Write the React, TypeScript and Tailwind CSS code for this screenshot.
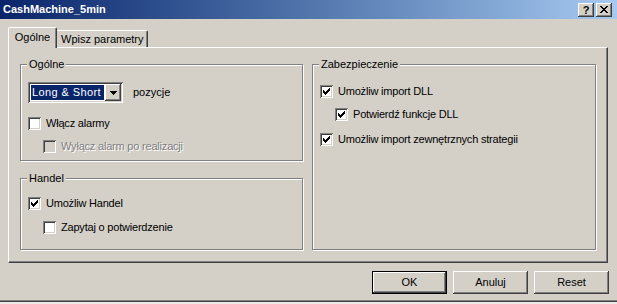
import React from "react";

const raised =
  "shadow-[inset_-1px_-1px_0_#404040,inset_1px_1px_0_#ffffff,inset_-2px_-2px_0_#808080,inset_2px_2px_0_#d4d0c8]";
const sunken =
  "shadow-[inset_1px_1px_0_#808080,inset_-1px_-1px_0_#ffffff,inset_2px_2px_0_#404040,inset_-2px_-2px_0_#d4d0c8]";

function Pixels({ rows, w, h, color = "#000" }: { rows: string[]; w: number; h: number; color?: string }) {
  const rects: React.ReactElement[] = [];
  rows.forEach((r, y) => {
    for (let x = 0; x < r.length; x++) {
      if (r[x] === "X") rects.push(<rect key={`${x}-${y}`} x={x} y={y} width={1} height={1} fill={color} />);
    }
  });
  return (
    <svg width={w} height={h} viewBox={`0 0 ${w} ${h}`} shapeRendering="crispEdges">
      {rects}
    </svg>
  );
}

const CHECK = ["......X", ".....XX", "X...XXX", "XX.XXX.", "XXXXX..", ".XXX...", "..X...."];
const CLOSE = ["XX....XX", ".XX..XX.", "..XXXX..", "...XX...", "..XXXX..", ".XX..XX.", "XX....XX"];
const ARROW = ["XXXXXXX", ".XXXXX.", "..XXX..", "...X..."];

function Checkbox({ checked, disabled }: { checked?: boolean; disabled?: boolean }) {
  return (
    <div
      className={`w-[13px] h-[13px] shrink-0 flex items-center justify-center ${sunken} ${
        disabled ? "bg-[#d4d0c8]" : "bg-white"
      }`}
    >
      {checked && <Pixels rows={CHECK} w={7} h={7} color={disabled ? "#808080" : "#000"} />}
    </div>
  );
}

function CheckRow({
  label,
  checked,
  disabled,
  indent,
  className = "",
}: {
  label: string;
  checked?: boolean;
  disabled?: boolean;
  indent?: boolean;
  className?: string;
}) {
  return (
    <div className={`flex items-center gap-[5px] h-[13px] ${indent ? "ml-[15px]" : ""} ${className}`}>
      <Checkbox checked={checked} disabled={disabled} />
      <span
        className={`leading-[13px] whitespace-nowrap tracking-[-0.2px] ${
          disabled ? "text-[#808080] [text-shadow:1px_1px_0_#ffffff]" : "text-black"
        }`}
      >
        {label}
      </span>
    </div>
  );
}

function GroupBox({
  title,
  className = "",
  children,
}: {
  title: string;
  className?: string;
  children: React.ReactNode;
}) {
  return (
    <div
      className={`relative box-border border border-[#808080] shadow-[1px_1px_0_#ffffff,inset_1px_1px_0_#ffffff] ${className}`}
    >
      <span className="absolute -top-[7px] left-[6px] px-[2px] bg-[#d4d0c8] leading-[13px] whitespace-nowrap">
        {title}
      </span>
      {children}
    </div>
  );
}

function Button({ label, isDefault }: { label: string; isDefault?: boolean }) {
  return (
    <div
      className={`w-[75px] h-[23px] box-border flex items-center justify-center bg-[#d4d0c8] ${
        isDefault ? "border border-black" : ""
      } ${raised}`}
    >
      <span className="leading-[13px]">{label}</span>
    </div>
  );
}

export default function App() {
  return (
    <div className="w-[617px] h-[304px] overflow-hidden bg-[#d4d0c8] flex flex-col text-[11px] text-black font-['Liberation_Sans',Arial,sans-serif]">
      {/* Title bar */}
      <div className="h-[19px] shrink-0 flex items-center pl-[3px] pr-[5px] bg-linear-to-r from-[#0a246a] to-[#a6caf0]">
        <span className="text-white font-bold leading-[13px]">CashMachine_5min</span>
        <div className="ml-auto flex gap-[2px]">
          <div className={`w-[16px] h-[14px] bg-[#d4d0c8] flex items-center justify-center ${raised}`}>
            <span className="font-bold text-[11px] leading-[11px] mt-[1px]">?</span>
          </div>
          <div className={`w-[16px] h-[14px] bg-[#d4d0c8] flex items-center justify-center ${raised}`}>
            <Pixels rows={CLOSE} w={8} h={7} />
          </div>
        </div>
      </div>

      {/* Tabs */}
      <div className="flex items-end h-[20px] ml-[8px] mt-[8px] shrink-0">
        <div className="relative z-10 w-[49px] h-[21px] -mb-[1px] box-border bg-[#d4d0c8] border-l border-t border-white border-r border-r-[#404040] shadow-[inset_-1px_0_0_#808080] rounded-tl-[2px] rounded-tr-[2px] flex items-center justify-center">
          <span className="leading-[13px] -mt-[1px]">Ogólne</span>
        </div>
        <div className="w-[91px] h-[17px] box-border bg-[#d4d0c8] border-t border-white border-r border-r-[#404040] shadow-[inset_-1px_0_0_#808080] rounded-tr-[2px] flex items-center pl-[4px]">
          <span className="leading-[13px] whitespace-nowrap">Wpisz parametry</span>
        </div>
      </div>

      {/* Panel */}
      <div className="ml-[8px] w-[600px] h-[216px] shrink-0 box-border border-l border-t border-white border-r border-b border-r-[#404040] border-b-[#404040] shadow-[inset_-1px_-1px_0_#808080] pl-[11px] pr-[11px] pt-[16px] pb-[12px] flex gap-[9px]">
        <div className="w-[283px] flex flex-col gap-[17px]">
          <GroupBox title="Ogólne" className="h-[97px] pt-[17px] pl-[7px]">
            <div className="flex items-center gap-[10px]">
              <div className={`w-[95px] h-[21px] box-border p-[2px] bg-white flex ${sunken}`}>
                <div className="flex-1 p-[1px]">
                  <div className="h-full bg-[#0a246a] text-white flex items-center pl-[1px]">
                    <span className="leading-[13px] whitespace-nowrap tracking-[0.4px]">Long &amp; Short</span>
                  </div>
                </div>
                <div className={`w-[16px] h-[17px] bg-[#d4d0c8] flex items-center justify-center ${raised}`}>
                  <Pixels rows={ARROW} w={7} h={4} />
                </div>
              </div>
              <span className="leading-[13px]">pozycje</span>
            </div>
            <CheckRow label="Włącz alarmy" className="mt-[14px]" />
            <CheckRow label="Wyłącz alarm po realizacji" disabled indent className="mt-[10px]" />
          </GroupBox>
          <GroupBox title="Handel" className="h-[72px] pt-[18px] pl-[7px]">
            <CheckRow label="Umożliw Handel" checked />
            <CheckRow label="Zapytaj o potwierdzenie" indent className="mt-[11px]" />
          </GroupBox>
        </div>
        <GroupBox title="Zabezpieczenie" className="w-[284px] h-[186px] pt-[20px] pl-[7px]">
          <CheckRow label="Umożliw import DLL" checked />
          <CheckRow label="Potwierdź funkcje DLL" checked indent className="mt-[10px]" />
          <CheckRow label="Umożliw import zewnętrznych strategii" checked className="mt-[12px]" />
        </GroupBox>
      </div>

      {/* Buttons */}
      <div className="flex justify-end gap-[6px] pr-[8px] mt-[8px] shrink-0">
        <Button label="OK" isDefault />
        <Button label="Anuluj" />
        <Button label="Reset" />
      </div>

      {/* Bottom frame */}
      <div className="mt-auto shrink-0">
        <div className="h-[2px] box-border border-t border-[#808080] border-b border-b-[#404040]" />
        <div className="h-[2px] bg-[#ecebe8]" />
      </div>
    </div>
  );
}
